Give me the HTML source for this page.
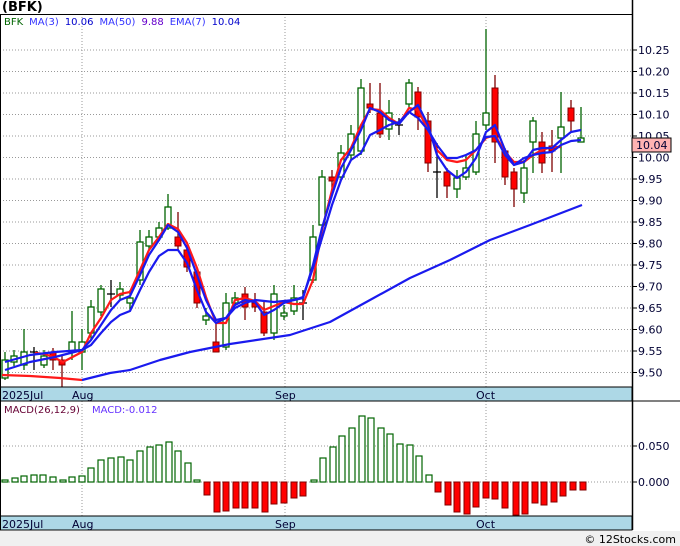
<!DOCTYPE html>
<html><head><meta charset="utf-8"><style>
html,body{margin:0;padding:0;background:#fff;}
svg{display:block;font-family:"DejaVu Sans","Liberation Sans",sans-serif;}
</style></head><body>
<svg width="680" height="546" viewBox="0 0 680 546" xmlns="http://www.w3.org/2000/svg">
<rect x="0" y="0" width="680" height="546" fill="#fff"/>
<text x="2" y="11" font-size="13" font-weight="bold" fill="#000">(BFK)</text>
<!-- grid top -->
<g stroke="#999" stroke-dasharray="1,2" stroke-width="1">
<line x1="0" y1="50" x2="632" y2="50"/><line x1="0" y1="71.5" x2="632" y2="71.5"/><line x1="0" y1="93" x2="632" y2="93"/><line x1="0" y1="114.5" x2="632" y2="114.5"/><line x1="0" y1="136" x2="632" y2="136"/><line x1="0" y1="157.5" x2="632" y2="157.5"/><line x1="0" y1="179" x2="632" y2="179"/><line x1="0" y1="200.5" x2="632" y2="200.5"/><line x1="0" y1="222" x2="632" y2="222"/><line x1="0" y1="243.5" x2="632" y2="243.5"/><line x1="0" y1="265" x2="632" y2="265"/><line x1="0" y1="286.5" x2="632" y2="286.5"/><line x1="0" y1="308" x2="632" y2="308"/><line x1="0" y1="329.5" x2="632" y2="329.5"/><line x1="0" y1="351" x2="632" y2="351"/><line x1="0" y1="372.5" x2="632" y2="372.5"/>
<line x1="82" y1="14" x2="82" y2="387"/><line x1="285" y1="14" x2="285" y2="387"/><line x1="486" y1="14" x2="486" y2="387"/>
<line x1="0" y1="446" x2="632" y2="446"/><line x1="0" y1="482" x2="632" y2="482"/>
<line x1="82" y1="401" x2="82" y2="516"/><line x1="285" y1="401" x2="285" y2="516"/><line x1="486" y1="401" x2="486" y2="516"/>
</g>
<text x="4" y="25" font-size="10"><tspan fill="#006400">BFK</tspan><tspan fill="#3333ff" dx="6">MA(3)</tspan><tspan fill="#0000cc" dx="6">10.06</tspan><tspan fill="#3333ff" dx="6">MA(50)</tspan><tspan fill="#6600cc" dx="6">9.88</tspan><tspan fill="#3333ff" dx="6">EMA(7)</tspan><tspan fill="#0000cc" dx="6">10.04</tspan></text>
<!-- wicks -->
<g stroke="#006400" stroke-width="1.3">
<line x1="5" y1="352" x2="5" y2="380"/><line x1="14" y1="350" x2="14" y2="366"/><line x1="24" y1="329" x2="24" y2="370"/><line x1="44" y1="350" x2="44" y2="368"/><line x1="72" y1="311" x2="72" y2="360"/><line x1="82" y1="329" x2="82" y2="370"/><line x1="91" y1="300" x2="91" y2="340"/><line x1="101" y1="285" x2="101" y2="316"/><line x1="120" y1="282" x2="120" y2="300"/><line x1="130" y1="290" x2="130" y2="310"/><line x1="140" y1="230" x2="140" y2="285"/><line x1="149" y1="230" x2="149" y2="250"/><line x1="159" y1="222" x2="159" y2="240"/><line x1="168" y1="194" x2="168" y2="230"/><line x1="206" y1="308" x2="206" y2="325"/><line x1="226" y1="293" x2="226" y2="350"/><line x1="235" y1="292" x2="235" y2="306"/><line x1="274" y1="285" x2="274" y2="340"/><line x1="284" y1="305" x2="284" y2="320"/><line x1="294" y1="285" x2="294" y2="315"/><line x1="313" y1="225" x2="313" y2="283"/><line x1="322" y1="170" x2="322" y2="225"/><line x1="341" y1="145" x2="341" y2="180"/><line x1="351" y1="125" x2="351" y2="160"/><line x1="361" y1="79" x2="361" y2="155"/><line x1="389" y1="100" x2="389" y2="140"/><line x1="409" y1="79" x2="409" y2="107"/><line x1="457" y1="170" x2="457" y2="198"/><line x1="466" y1="156" x2="466" y2="180"/><line x1="476" y1="121" x2="476" y2="175"/><line x1="486" y1="29" x2="486" y2="130"/><line x1="524" y1="160" x2="524" y2="203"/><line x1="533" y1="117" x2="533" y2="173"/><line x1="561" y1="92" x2="561" y2="173"/><line x1="581" y1="107" x2="581" y2="142"/>
</g>
<g stroke="#800000" stroke-width="1.3">
<line x1="53" y1="348" x2="53" y2="370"/><line x1="62" y1="356" x2="62" y2="387"/><line x1="178" y1="212" x2="178" y2="250"/><line x1="187" y1="245" x2="187" y2="272"/><line x1="197" y1="268" x2="197" y2="308"/><line x1="216" y1="324" x2="216" y2="352"/><line x1="245" y1="287" x2="245" y2="320"/><line x1="255" y1="293" x2="255" y2="312"/><line x1="264" y1="300" x2="264" y2="336"/><line x1="332" y1="170" x2="332" y2="190"/><line x1="370" y1="83" x2="370" y2="113"/><line x1="380" y1="83" x2="380" y2="138"/><line x1="418" y1="87" x2="418" y2="130"/><line x1="428" y1="112" x2="428" y2="172"/><line x1="447" y1="168" x2="447" y2="198"/><line x1="495" y1="75" x2="495" y2="163"/><line x1="505" y1="148" x2="505" y2="185"/><line x1="514" y1="168" x2="514" y2="207"/><line x1="542" y1="132" x2="542" y2="173"/><line x1="552" y1="130" x2="552" y2="172"/><line x1="571" y1="100" x2="571" y2="132"/>
</g>
<g stroke="#000" stroke-width="1.3">
<line x1="34" y1="347" x2="34" y2="370"/><line x1="30" y1="352" x2="38" y2="352"/>
<line x1="111" y1="280" x2="111" y2="307"/><line x1="107" y1="294" x2="115" y2="294"/>
<line x1="303" y1="290" x2="303" y2="320"/><line x1="299" y1="303" x2="307" y2="303"/>
<line x1="399" y1="118" x2="399" y2="135"/><line x1="395" y1="125" x2="403" y2="125"/>
<line x1="437" y1="143" x2="437" y2="198"/><line x1="433" y1="172" x2="441" y2="172"/>
</g>
<!-- green bodies -->
<g fill="#fff" stroke="#006400" stroke-width="1.3">
<rect x="2" y="360" width="6" height="18"/><rect x="11" y="356" width="6" height="6"/><rect x="21" y="352" width="6" height="13"/><rect x="41" y="356" width="6" height="9"/><rect x="69" y="342" width="6" height="10"/><rect x="79" y="342" width="6" height="10"/><rect x="88" y="307" width="6" height="26"/><rect x="98" y="289" width="6" height="23"/><rect x="117" y="289" width="6" height="6"/><rect x="127" y="298" width="6" height="5"/><rect x="137" y="242" width="6" height="38"/><rect x="146" y="237" width="6" height="9"/><rect x="156" y="228" width="6" height="9"/><rect x="165" y="207" width="6" height="21"/><rect x="203" y="316" width="6" height="4"/><rect x="223" y="303" width="6" height="44"/><rect x="232" y="298" width="6" height="5"/><rect x="271" y="294" width="6" height="39"/><rect x="281" y="313" width="6" height="3"/><rect x="291" y="298" width="6" height="13"/><rect x="310" y="237" width="6" height="43"/><rect x="319" y="177" width="6" height="48"/><rect x="338" y="153" width="6" height="24"/><rect x="348" y="134" width="6" height="21"/><rect x="358" y="88" width="6" height="63"/><rect x="386" y="113" width="6" height="16"/><rect x="406" y="83" width="6" height="21"/><rect x="454" y="178" width="6" height="11"/><rect x="463" y="168" width="6" height="9"/><rect x="473" y="134" width="6" height="38"/><rect x="483" y="113" width="6" height="12"/><rect x="521" y="168" width="6" height="25"/><rect x="530" y="121" width="6" height="21"/><rect x="558" y="127" width="6" height="11"/><rect x="578" y="138" width="6" height="4"/>
</g>
<g fill="#ff0000" stroke="#800000" stroke-width="1">
<rect x="50" y="352" width="6" height="8"/><rect x="59" y="360" width="6" height="5"/><rect x="175" y="237" width="6" height="9"/><rect x="184" y="250" width="6" height="17"/><rect x="194" y="272" width="6" height="31"/><rect x="213" y="342" width="6" height="10"/><rect x="242" y="294" width="6" height="13"/><rect x="252" y="303" width="6" height="4"/><rect x="261" y="312" width="6" height="21"/><rect x="329" y="177" width="6" height="4"/><rect x="367" y="104" width="6" height="4"/><rect x="377" y="113" width="6" height="21"/><rect x="415" y="92" width="6" height="25"/><rect x="425" y="121" width="6" height="42"/><rect x="444" y="172" width="6" height="14"/><rect x="492" y="88" width="6" height="54"/><rect x="502" y="151" width="6" height="26"/><rect x="511" y="172" width="6" height="17"/><rect x="539" y="142" width="6" height="21"/><rect x="549" y="146" width="6" height="5"/><rect x="568" y="108" width="6" height="13"/>
</g>
<!-- lines -->
<g fill="none" stroke-width="2.2" stroke-linejoin="round">
<polyline stroke="#ff1a1a" points="2,375 30,376 60,378 82,380"/>
<polyline stroke="#1a1aee" points="82,380 110,373 130,370 160,360 190,352 230,344 290,335 330,322 370,300 410,278 450,260 490,240 530,225 582,205"/>
<polyline stroke="#ff1a1a" points="35,353 45,354 55,358 63,362 82,352 91,333 101,318 111,300 120,294 130,292 140,270 149,250 159,237 168,224 178,229 187,243 197,268 206,297 216,323 226,323 235,300 245,298 255,301 264,310 274,306 284,302 294,304 303,304 313,280 322,230 332,190 341,160 351,148 361,125 370,109 380,110 389,118 399,124 409,108 418,110 428,130 437,150 447,160 457,162 466,160 476,150 486,138 495,135 505,152 514,162 524,162 533,155 542,150 552,147 561,147"/>
<polyline stroke="#1a1aee" points="5,370 30,362 55,357 82,350 91,340 101,325 111,310 120,300 130,296 140,275 149,255 159,240 168,225 178,232 187,248 197,275 206,300 216,320 226,318 235,305 245,300 255,302 264,315 274,310 284,303 294,300 303,298 313,265 322,228 332,195 341,168 351,150 361,130 370,108 380,112 389,120 399,124 409,112 418,105 428,125 437,155 447,170 457,178 466,172 476,158 486,132 495,125 505,150 514,165 524,162 533,150 542,148 552,148 561,140 571,132 581,130"/>
<polyline stroke="#1a1aee" points="5,362 30,355 55,352 82,350 91,345 101,333 111,322 120,315 130,311 140,290 149,272 159,256 168,250 178,250 187,263 197,290 206,312 216,323 226,318 235,308 245,303 255,300 274,302 294,300 303,297 313,268 322,238 332,205 341,180 351,160 361,153 370,135 380,130 389,125 399,122 409,112 418,118 428,130 437,145 447,158 457,158 466,155 476,150 486,137 495,136 505,155 514,165 524,158 533,155 542,153 552,152 561,145 571,141 581,140"/>
</g>
<!-- MACD bars -->
<g fill="#fff" stroke="#006400" stroke-width="1.2">
<rect x="2" y="480" width="6" height="2"/><rect x="12" y="478" width="6" height="4"/><rect x="21" y="476" width="6" height="6"/><rect x="31" y="475" width="6" height="7"/><rect x="40" y="475" width="6" height="7"/><rect x="50" y="477" width="6" height="5"/><rect x="60" y="480" width="6" height="2"/><rect x="69" y="477" width="6" height="5"/><rect x="79" y="476" width="6" height="6"/><rect x="88" y="468" width="6" height="14"/><rect x="98" y="460" width="6" height="22"/><rect x="108" y="458" width="6" height="24"/><rect x="118" y="457" width="6" height="25"/><rect x="127" y="460" width="6" height="22"/><rect x="137" y="451" width="6" height="31"/><rect x="147" y="447" width="6" height="35"/><rect x="156" y="445" width="6" height="37"/><rect x="166" y="442" width="6" height="40"/><rect x="175" y="451" width="6" height="31"/><rect x="185" y="463" width="6" height="19"/><rect x="194" y="480" width="6" height="2"/>
<rect x="311" y="480" width="6" height="2"/><rect x="320" y="458" width="6" height="24"/><rect x="330" y="447" width="6" height="35"/><rect x="339" y="436" width="6" height="46"/><rect x="349" y="428" width="6" height="54"/><rect x="359" y="416" width="6" height="66"/><rect x="368" y="418" width="6" height="64"/><rect x="378" y="428" width="6" height="54"/><rect x="387" y="434" width="6" height="48"/><rect x="397" y="444" width="6" height="38"/><rect x="407" y="445" width="6" height="37"/><rect x="416" y="456" width="6" height="26"/><rect x="426" y="475" width="6" height="7"/>
</g>
<g fill="#ff0000" stroke="#800000" stroke-width="1">
<rect x="204" y="482" width="6" height="13"/><rect x="214" y="482" width="6" height="30"/><rect x="223" y="482" width="6" height="29"/><rect x="233" y="482" width="6" height="26"/><rect x="242" y="482" width="6" height="26"/><rect x="252" y="482" width="6" height="26"/><rect x="262" y="482" width="6" height="30"/><rect x="271" y="482" width="6" height="22"/><rect x="281" y="482" width="6" height="21"/><rect x="291" y="482" width="6" height="16"/><rect x="300" y="482" width="6" height="14"/>
<rect x="435" y="482" width="6" height="10"/><rect x="445" y="482" width="6" height="23"/><rect x="454" y="482" width="6" height="30"/><rect x="464" y="482" width="6" height="32"/><rect x="473" y="482" width="6" height="25"/><rect x="483" y="482" width="6" height="16"/><rect x="492" y="482" width="6" height="17"/><rect x="502" y="482" width="6" height="26"/><rect x="513" y="482" width="6" height="33"/><rect x="522" y="482" width="6" height="32"/><rect x="532" y="482" width="6" height="21"/><rect x="541" y="482" width="6" height="23"/><rect x="551" y="482" width="6" height="20"/><rect x="560" y="482" width="6" height="14"/><rect x="570" y="482" width="6" height="8"/><rect x="580" y="482" width="6" height="8"/>
</g>
<text x="4" y="413" font-size="10"><tspan fill="#660033">MACD(26,12,9)</tspan><tspan fill="#6633ff" dx="12">MACD:-0.012</tspan></text>
<!-- strips -->
<rect x="0" y="387" width="632" height="14" fill="#add8e6" stroke="#000" stroke-width="1"/>
<rect x="0" y="516" width="632" height="14" fill="#add8e6" stroke="#000" stroke-width="1"/>
<g font-size="11" fill="#000033">
<text x="2" y="399">2025Jul</text><text x="72" y="399">Aug</text><text x="275" y="399">Sep</text><text x="476" y="399">Oct</text>
<text x="2" y="528">2025Jul</text><text x="72" y="528">Aug</text><text x="275" y="528">Sep</text><text x="476" y="528">Oct</text>
</g>
<!-- axes -->
<line x1="0.5" y1="14" x2="0.5" y2="530" stroke="#000"/>
<line x1="632.5" y1="0" x2="632.5" y2="530" stroke="#000" stroke-width="1.5"/>
<line x1="0" y1="14.5" x2="632" y2="14.5" stroke="#000"/>
<line x1="0" y1="401" x2="680" y2="401" stroke="#000"/>
<g stroke="#000">
<line x1="632" y1="50" x2="637" y2="50"/><line x1="632" y1="71.5" x2="637" y2="71.5"/><line x1="632" y1="93" x2="637" y2="93"/><line x1="632" y1="114.5" x2="637" y2="114.5"/><line x1="632" y1="136" x2="637" y2="136"/><line x1="632" y1="157.5" x2="637" y2="157.5"/><line x1="632" y1="179" x2="637" y2="179"/><line x1="632" y1="200.5" x2="637" y2="200.5"/><line x1="632" y1="222" x2="637" y2="222"/><line x1="632" y1="243.5" x2="637" y2="243.5"/><line x1="632" y1="265" x2="637" y2="265"/><line x1="632" y1="286.5" x2="637" y2="286.5"/><line x1="632" y1="308" x2="637" y2="308"/><line x1="632" y1="329.5" x2="637" y2="329.5"/><line x1="632" y1="351" x2="637" y2="351"/><line x1="632" y1="372.5" x2="637" y2="372.5"/>
<line x1="632" y1="446" x2="637" y2="446"/><line x1="632" y1="482" x2="637" y2="482"/>
</g>
<g font-size="11" fill="#000033">
<text x="638" y="54">10.25</text><text x="638" y="75.5">10.20</text><text x="638" y="97">10.15</text><text x="638" y="118.5">10.10</text><text x="638" y="140">10.05</text><text x="638" y="161.5">10.00</text><text x="638" y="183">9.95</text><text x="638" y="204.5">9.90</text><text x="638" y="226">9.85</text><text x="638" y="247.5">9.80</text><text x="638" y="269">9.75</text><text x="638" y="290.5">9.70</text><text x="638" y="312">9.65</text><text x="638" y="333.5">9.60</text><text x="638" y="355">9.55</text><text x="638" y="376.5">9.50</text>
<text x="638" y="450">0.050</text><text x="638" y="486">0.000</text>
</g>
<rect x="632" y="138" width="39" height="14" fill="#ffb3b3" stroke="#000"/>
<text x="636" y="149" font-size="11" fill="#000033">10.04</text>
<rect x="0" y="531" width="680" height="15" fill="#f0f0f0"/>
<text x="676" y="543" font-size="11" fill="#000" text-anchor="end">© 12Stocks.com</text>
</svg>
</body></html>
